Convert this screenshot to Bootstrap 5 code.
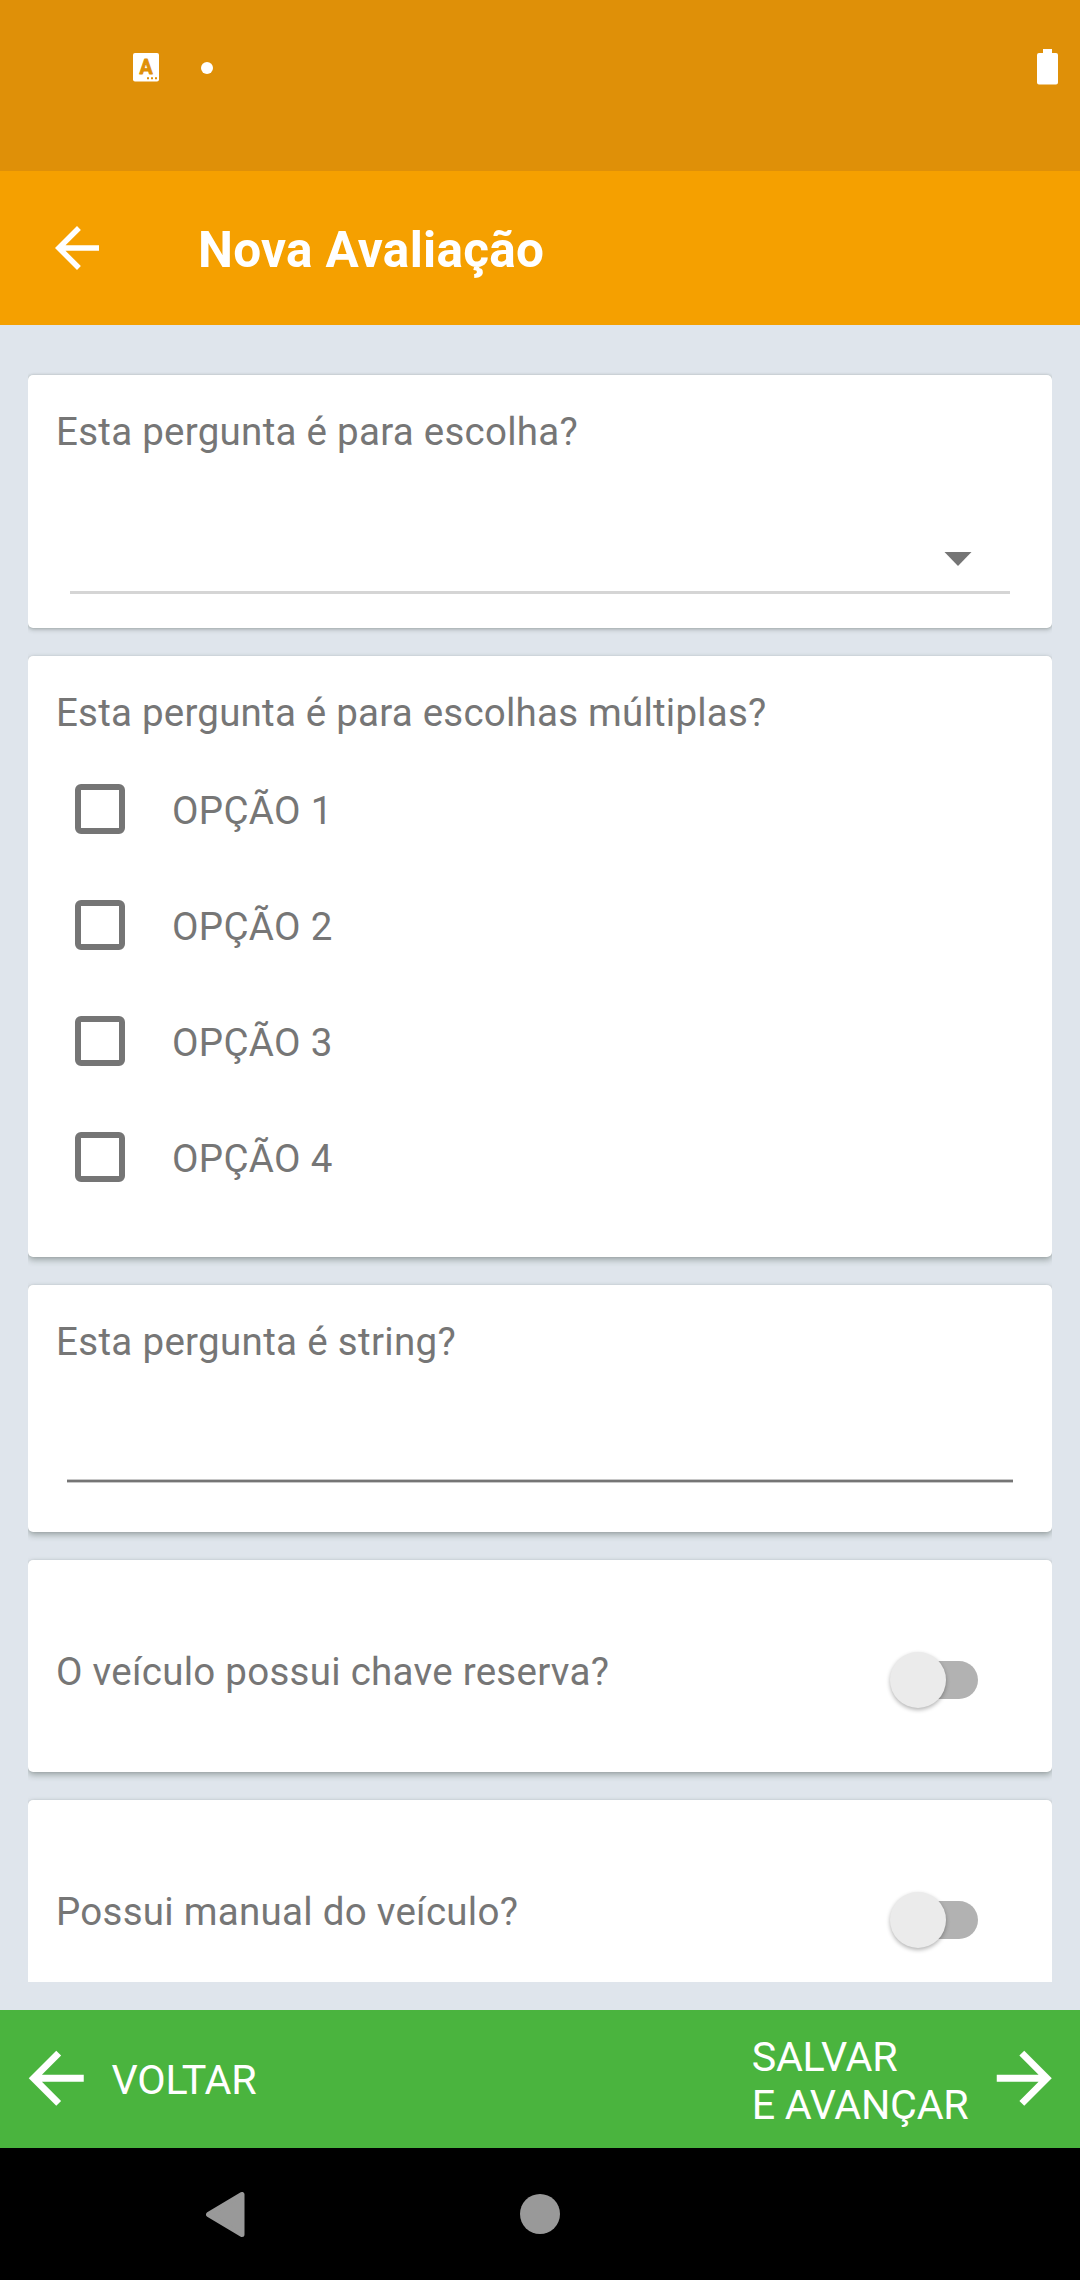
<!DOCTYPE html>
<html lang="pt-BR">
<head>
<meta charset="utf-8">
<meta name="viewport" content="width=device-width, initial-scale=1">
<title>Nova Avaliação</title>
<link href="https://cdn.jsdelivr.net/npm/bootstrap@5.3.0/dist/css/bootstrap.min.css" rel="stylesheet">
<style>
  body { font-family: Roboto, "Noto Sans", sans-serif; font-size: 38.5px; line-height: 45px; letter-spacing: .27px; color: #767676; background: #dfe5ec; }
  svg { display: block; flex: none; }
  .screen { width: 1080px; height: 2280px; overflow: hidden; }
  .status { height: 171px; background: #df9008; padding: 49px 22px 0 133px; }
  .appbar { height: 154px; background: #f5a000; padding: 0 44px; gap: 88px; }
  .appbar h1 { font-size: 49.5px; line-height: 58px; padding-top: 4px; letter-spacing: .3px; }
  .questions { flex: 1 1 0; min-height: 0; margin: 0 28px 28px; padding-top: 50px; gap: 28px; overflow: hidden; }
  .question { border: 0; border-radius: 5px; flex: none; padding: 34px 28px 0; color: inherit; box-shadow: 0 0 2px rgba(60,70,60,.15), 0 3px 6px rgba(50,65,55,.38); }
  .q-select { height: 253px; box-shadow: 0 0 3px rgba(60,70,60,.25), 0 2px 4px rgba(50,65,55,.25); }
  .q-multi { height: 601px; letter-spacing: .22px; }
  .q-text { height: 247px; letter-spacing: .32px; }
  .q-switch { height: 212px; padding-top: 0; padding-right: 74px; }
  .q-switch .caption-text { padding-top: 11px; }
  .drop { height: 97px; margin: 43px 14px 0; padding: 55px 38px 0 0; border-bottom: 3px solid #d5d5d5; }
  .options { margin: 16px 0 0 14px; letter-spacing: .32px; }
  .option { height: 116px; padding-left: 5px; gap: 47px; }
  .option span { padding-top: 3px; }
  .box { appearance: none; width: 50px; height: 50px; margin: 0; border: 6px solid #757575; border-radius: 6px; background: #fff; }
  .entry { height: 82px; margin: 36px 11px 0; border: 0; border-bottom: 2px solid #757575; border-radius: 0; padding: 0; box-shadow: 0 1px #c8c8c8, inset 0 -1px #c8c8c8; }
  .toggle { width: 88px; height: 56px; margin-top: 28px; }
  .toggle .track { width: 75px; height: 38px; border-radius: 19px; background: #b2b2b2; margin-left: 13px; }
  .toggle .thumb { left: 0; top: 0; width: 56px; height: 56px; background: #ebebeb; box-shadow: 0 2px 4px rgba(0,0,0,.3); }
  .actions { height: 138px; background: #4ab43e; padding: 0 14.5px; font-size: 41.25px; line-height: 48.3px; letter-spacing: -.25px; }
  .actions > div { gap: 14.5px; }
  .actions svg { margin-bottom: 1px; }
  .actions span { padding-top: 2px; }
  .actions .next-label { padding-top: 4px; }
  .sysnav { height: 132px; background: #000; padding-left: 206px; gap: 275px; }
</style>
</head>
<body>
<div class="screen d-flex flex-column">
  <div class="status flex-shrink-0 d-flex align-items-start justify-content-between">
    <div class="d-flex align-items-center pt-1">
      <svg width="26" height="29" viewBox="0 0 26 29"><rect width="26" height="28.500" rx="2" fill="#fff"/><text x="13" y="21" text-anchor="middle" font-family="Roboto" font-weight="700" font-size="19.500" letter-spacing="0" fill="#df9008" stroke="#df9008" stroke-width=".8" stroke-linejoin="round">A</text><path d="M14 25.200h2M18 25.200h2M22 25.200h2" stroke="#df9008" stroke-width="2"/></svg>
      <svg width="54" height="12" viewBox="0 0 54 12"><circle cx="48" cy="6" r="6" fill="#fff" /></svg>
    </div>
    <svg width="21" height="36" viewBox="0 0 21 36"><path d="M6 0h9v4h4q2 0 2 2v27.500q0 2-2 2H2q-2 0-2-2V6q0-2 2-2h4z" fill="#fff"/></svg>
  </div>
  <header class="appbar flex-shrink-0 d-flex align-items-center text-white">
    <svg width="66" height="66" viewBox="0 0 24 24" fill="#fff"><path d="M20 11H7.830l5.590-5.590L12 4l-8 8 8 8 1.410-1.410L7.830 13H20z"/></svg>
    <h1 class="mb-0 fw-bold">Nova Avaliação</h1>
  </header>

  <main class="questions d-flex flex-column">
    <section class="card question q-select">
      <div>Esta pergunta é para escolha?</div>
      <div class="drop d-flex justify-content-end">
        <svg width="28" height="14" viewBox="0 0 28 14"><path d="M0.500 0h27L14 14z" fill="#757575"/></svg>
      </div>
    </section>

    <section class="card question q-multi">
      <div>Esta pergunta é para escolhas múltiplas?</div>
      <div class="options">
        <label class="option d-flex align-items-center"><input class="box" type="checkbox"><span>OPÇÃO 1</span></label>
        <label class="option d-flex align-items-center"><input class="box" type="checkbox"><span>OPÇÃO 2</span></label>
        <label class="option d-flex align-items-center"><input class="box" type="checkbox"><span>OPÇÃO 3</span></label>
        <label class="option d-flex align-items-center"><input class="box" type="checkbox"><span>OPÇÃO 4</span></label>
      </div>
    </section>

    <section class="card question q-text">
      <label for="resposta">Esta pergunta é string?</label>
      <input id="resposta" class="entry" type="text">
    </section>

    <section class="card question q-switch flex-row align-items-center justify-content-between">
      <div class="caption-text">O veículo possui chave reserva?</div>
      <div class="toggle position-relative d-flex align-items-center"><span class="track"></span><span class="thumb position-absolute rounded-circle"></span></div>
    </section>

    <section class="card question q-switch flex-row align-items-center justify-content-between">
      <div class="caption-text">Possui manual do veículo?</div>
      <div class="toggle position-relative d-flex align-items-center"><span class="track"></span><span class="thumb position-absolute rounded-circle"></span></div>
    </section>
  </main>

  <footer class="actions flex-shrink-0 d-flex align-items-center justify-content-between text-white">
    <div class="d-flex align-items-center">
      <svg width="82.500" height="82.500" viewBox="0 0 24 24" fill="#fff"><path d="M20 11H7.830l5.590-5.590L12 4l-8 8 8 8 1.410-1.410L7.830 13H20z"/></svg>
      <span>VOLTAR</span>
    </div>
    <div class="d-flex align-items-center">
      <span class="next-label">SALVAR<br>E AVANÇAR</span>
      <svg width="82.500" height="82.500" viewBox="0 0 24 24" fill="#fff"><path d="M4 11h12.170l-5.590-5.590L12 4l8 8-8 8-1.410-1.410L16.170 13H4z"/></svg>
    </div>
  </footer>
  <nav class="sysnav flex-shrink-0 d-flex align-items-center">
    <svg width="39" height="45" viewBox="0 0 39 45"><path d="M36 2.500v40L2.500 22.500z" fill="#999" stroke="#999" stroke-width="5" stroke-linejoin="round"/></svg>
    <svg width="40" height="40" viewBox="0 0 40 40"><circle cx="20" cy="20" r="20" fill="#999"/></svg>
  </nav>
</div>
<script src="https://cdn.jsdelivr.net/npm/bootstrap@5.3.0/dist/js/bootstrap.bundle.min.js"></script>
</body>
</html>
